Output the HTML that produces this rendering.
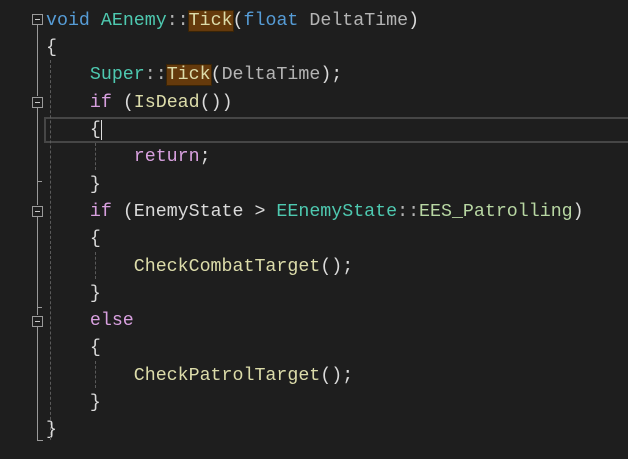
<!DOCTYPE html><html><head><style>
body{margin:0;width:628px;height:459px;background:#1e1e1e;overflow:hidden;position:relative;font-family:"Liberation Mono",monospace;font-size:18.3px;color:#dadada}
.l{position:absolute;left:46px;height:27px;line-height:27px;white-space:pre;margin-top:2px}
.k{color:#569cd6}.t{color:#4ec9b0}.f{color:#dcdcaa}.p{color:#b4b4b4}.c{color:#d8a0df}.o{color:#b4b4b4}.e{color:#b8d7a3}
.h{background:#653a0c;outline:1px solid #3a2406}
.fm{position:absolute;left:32px;width:9px;height:9px;border:1px solid #9a9a9a;box-sizing:content-box}
.fm:after{content:"";position:absolute;left:2px;top:4px;width:5px;height:1px;background:#c8c8c8}
.v{position:absolute;left:37px;width:1px;background:#9a9a9a}
.d{position:absolute;width:0;border-left:1px dashed #5a5a5a}
</style></head><body>
<div style="position:absolute;left:44px;top:117px;width:590px;height:26px;border:2px solid #464646;box-sizing:border-box"></div>
<div class="l" style="top:6px"><span class="k">void</span> <span class="t">AEnemy</span><span class="o">::</span><span class="f h">Tick</span>(<span class="k">float</span> <span class="p">DeltaTime</span>)</div>
<div class="l" style="top:33px">{</div>
<div class="l" style="top:60px">    <span class="t">Super</span><span class="o">::</span><span class="f h">Tick</span>(<span class="p">DeltaTime</span>);</div>
<div class="l" style="top:88px">    <span class="c">if</span> (<span class="f">IsDead</span>())</div>
<div class="l" style="top:115px">    {<span style="border-left:1px solid #ddd;margin-left:0"></span></div>
<div class="l" style="top:142px">        <span class="c">return</span>;</div>
<div class="l" style="top:170px">    }</div>
<div class="l" style="top:197px">    <span class="c">if</span> (EnemyState &gt; <span class="t">EEnemyState</span><span class="o">::</span><span class="e">EES_Patrolling</span>)</div>
<div class="l" style="top:224px">    {</div>
<div class="l" style="top:252px">        <span class="f">CheckCombatTarget</span>();</div>
<div class="l" style="top:279px">    }</div>
<div class="l" style="top:306px">    <span class="c">else</span></div>
<div class="l" style="top:333px">    {</div>
<div class="l" style="top:361px">        <span class="f">CheckPatrolTarget</span>();</div>
<div class="l" style="top:388px">    }</div>
<div class="l" style="top:415px">}</div>
<div class="fm" style="top:14px"></div>
<div class="fm" style="top:97px"></div>
<div class="fm" style="top:206px"></div>
<div class="fm" style="top:316px"></div>
<div class="v" style="top:25px;height:71px"></div>
<div class="v" style="top:108px;height:97px"></div>
<div class="v" style="top:217px;height:98px"></div>
<div class="v" style="top:327px;height:114px"></div>
<div style="position:absolute;left:37px;top:440px;width:6px;height:1px;background:#9a9a9a"></div>
<div style="position:absolute;left:37px;top:181px;width:5px;height:1px;background:#9a9a9a"></div>
<div style="position:absolute;left:37px;top:307px;width:5px;height:1px;background:#9a9a9a"></div>
<div class="d" style="left:50px;top:60px;height:380px"></div>
<div class="d" style="left:95px;top:143px;height:27px"></div>
<div class="d" style="left:95px;top:252px;height:27px"></div>
<div class="d" style="left:95px;top:361px;height:27px"></div>
</body></html>
